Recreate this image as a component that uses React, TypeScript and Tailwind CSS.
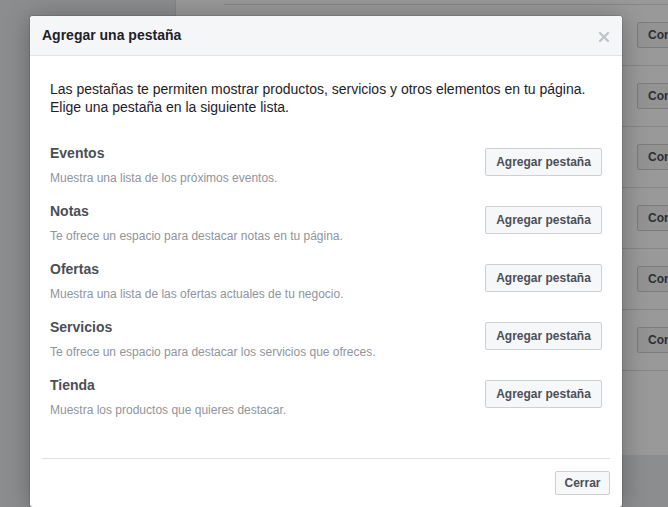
import React from 'react';

const tabs = [
    { name: 'Eventos', desc: 'Muestra una lista de los próximos eventos.' },
    { name: 'Notas', desc: 'Te ofrece un espacio para destacar notas en tu página.' },
    { name: 'Ofertas', desc: 'Muestra una lista de las ofertas actuales de tu negocio.' },
    { name: 'Servicios', desc: 'Te ofrece un espacio para destacar los servicios que ofreces.' },
    { name: 'Tienda', desc: 'Muestra los productos que quieres destacar.' },
];

function PageBehind() {
    return (
        <div className="flex h-full w-full">
            <div className="w-[176px] shrink-0 bg-[#e9ebee] border-r border-[#dfe1e5]" />
            <div className="flex flex-col flex-1 bg-white">
                <div className="flex-1 pl-12 pt-1">
                    <div className="border-t border-[#dddfe2] w-[700px]">
                        {[0, 1, 2, 3, 4, 5].map((i) => (
                            <div key={i} className="flex items-center h-[61px] border-b border-[#dddfe2]">
                                <div className="w-[413px] shrink-0" />
                                <button className="h-[26px] px-[10px] shrink-0 bg-[#f5f6f7] border border-[#ccd0d5] rounded-[2px] text-[12px] font-bold text-[#4b4f56]">
                                    Configuración
                                </button>
                            </div>
                        ))}
                    </div>
                </div>
                <div className="h-[52px] bg-[#e9ebee]" />
            </div>
        </div>
    );
}

export default function App() {
    return (
        <div className="relative w-[668px] h-[507px] overflow-hidden font-['Liberation_Sans',Arial,sans-serif]">
            <PageBehind />
            <div className="absolute inset-0 bg-black/40" />

            <div className="absolute left-[30px] top-[16px] w-[592px] bg-white rounded-[3px] shadow-[0_2px_26px_rgba(0,0,0,0.3),0_0_0_1px_rgba(0,0,0,0.1)]">
                <div className="flex items-center justify-between h-[40px] pl-3 pr-[13px] bg-[#f5f6f7] border-b border-[#e5e5e5] rounded-t-[3px]">
                    <h2 className="text-[14px] font-bold text-[#1d2129]">Agregar una pestaña</h2>
                    <svg width="10" height="10" viewBox="0 0 10 10" className="mt-[2px]">
                        <path d="M1 1 L9 9 M9 1 L1 9" stroke="#bec2c9" strokeWidth="2.2" strokeLinecap="square" />
                    </svg>
                </div>

                <div className="px-5 pt-6 pb-10">
                    <p className="text-[14px] leading-[18px] text-[#1d2129]">
                        Las pestañas te permiten mostrar productos, servicios y otros elementos en tu página.
                        <br />
                        Elige una pestaña en la siguiente lista.
                    </p>

                    <div className="flex flex-col gap-4 mt-7">
                        {tabs.map((t) => (
                            <div key={t.name} className="flex items-start justify-between">
                                <div>
                                    <div className="text-[14px] leading-[18px] font-bold text-[#4b4f56]">{t.name}</div>
                                    <div className="text-[12px] leading-[16px] text-[#90949c] mt-2">{t.desc}</div>
                                </div>
                                <button className="mt-1 h-[28px] w-[117px] bg-[#f6f7f9] border border-[#ced0d4] rounded-[2px] text-[12px] font-bold text-[#4b4f56]">
                                    Agregar pestaña
                                </button>
                            </div>
                        ))}
                    </div>
                </div>

                <div className="mx-3 border-t border-[#dddfe2]" />
                <div className="flex justify-end px-3 pt-3 pb-3">
                    <button className="h-[24px] w-[55px] bg-[#f6f7f9] border border-[#ced0d4] rounded-[2px] text-[12px] font-bold text-[#4b4f56]">
                        Cerrar
                    </button>
                </div>
            </div>
        </div>
    );
}
